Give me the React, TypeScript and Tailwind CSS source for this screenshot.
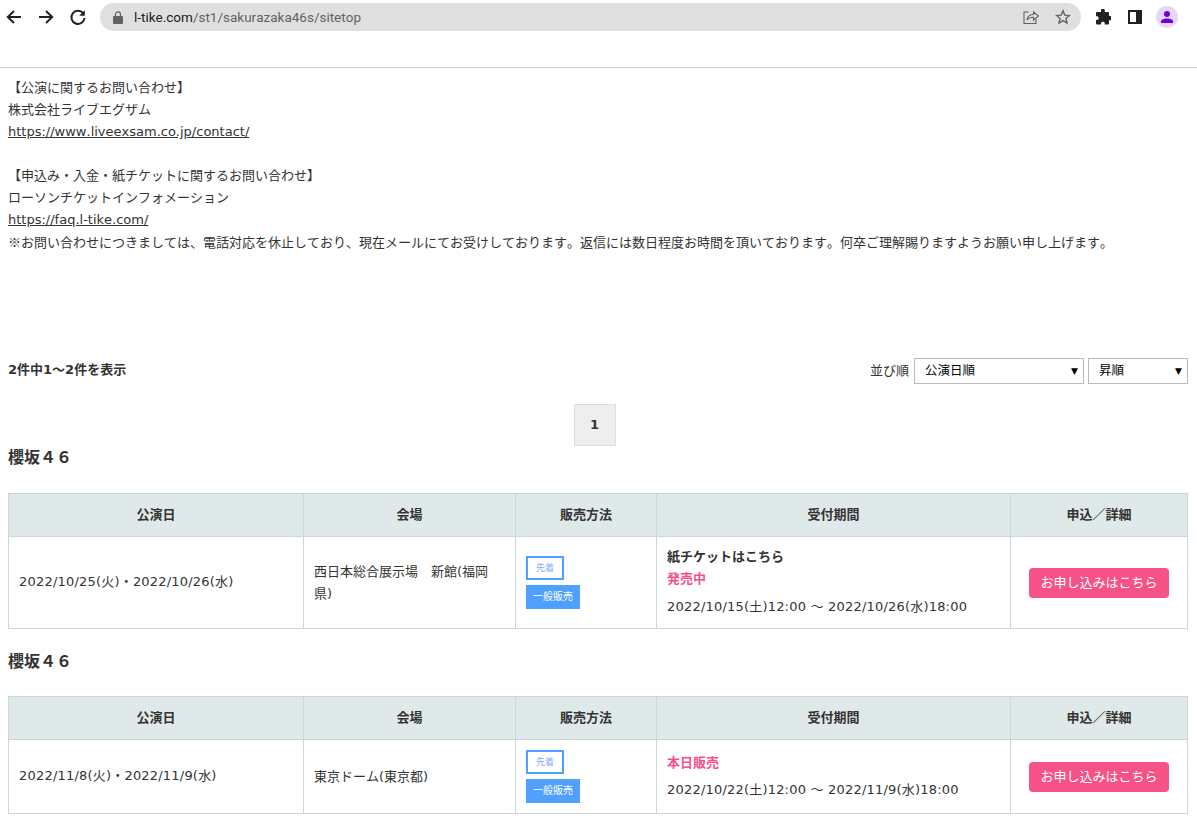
import React from "react";

const Cjk = ({ children }: { children: React.ReactNode }) => (
  <span className="font-['Noto_Sans_CJK_JP',sans-serif]">{children}</span>
);

function Chrome() {
  return (
    <div className="h-[34px] flex items-center bg-white">
      <div className="flex items-center w-[100px] pl-[5px]">
        <svg width="18" height="18" viewBox="0 0 18 18" fill="none" stroke="#202124" strokeWidth="2"><path d="M16 9H3M9 3L2.800 9 9 15" /></svg>
        <svg className="ml-[14px]" width="18" height="18" viewBox="0 0 18 18" fill="none" stroke="#202124" strokeWidth="2"><path d="M2 9h13M9 3l6.200 6L9 15" /></svg>
        <svg className="ml-[14px]" width="18" height="18" viewBox="0 0 18 18" fill="none"><path d="M14.200 5.200A6.600 6.600 0 1 0 15.600 10" stroke="#202124" strokeWidth="2" /><path d="M15.800 2.200v5.600h-5.600z" fill="#202124" /></svg>
      </div>
      <div className="w-[981px] h-[28px] rounded-full bg-[#dfdfdf] flex items-center">
        <svg className="ml-[13px]" width="10" height="13" viewBox="0 0 10 13"><path d="M1 5h8a1 1 0 0 1 1 1v6a1 1 0 0 1-1 1H1a1 1 0 0 1-1-1V6a1 1 0 0 1 1-1z" fill="#5f6368" /><path d="M2.500 5V3.400a2.500 2.500 0 0 1 5 0V5" fill="none" stroke="#5f6368" strokeWidth="1.200" /></svg>
        <span className="ml-[11px] text-[13.5px] text-[#5f6368] font-['Roboto',sans-serif]"><span className="text-[#202124]">l-tike.com</span>/st1/sakurazaka46s/sitetop</span>
        <div className="ml-auto flex items-center gap-[16px] pr-[10px]">
          <svg width="16" height="16" viewBox="0 0 16 16" fill="none" stroke="#5f6368" strokeWidth="1.100"><path d="M5.500 3H1v11.500h12V10" /><path d="M4 11c.5-3.500 3-5.500 6.500-5.500V3L15.500 7l-5 4V8.300C8 8.300 5.500 9 4 11z" /></svg>
          <svg width="16" height="16" viewBox="0 0 16 16" fill="none" stroke="#5f6368" strokeWidth="1.400"><path d="M8 1.800l1.800 4.300 4.600.4-3.500 3 1.100 4.500L8 11.600 4 14l1.100-4.500-3.500-3 4.600-.4z" /></svg>
        </div>
      </div>
      <div className="flex items-center flex-1 pl-[14px]">
        <svg width="16" height="16" viewBox="0 0 16 16" fill="#202124"><path d="M6 1.500a1.900 1.900 0 0 1 3.800 0V3H13a1 1 0 0 1 1 1v3h1a2 2 0 0 1 0 4.300h-1V14.500a1 1 0 0 1-1 1H9.800v-1.300a2 2 0 0 0-3.800 0v1.300H2a1 1 0 0 1-1-1v-3.500h1.300a2 2 0 0 0 0-3.800H1V4a1 1 0 0 1 1-1h4z" /></svg>
        <div className="ml-[17px] w-[14px] h-[14px] border-2 border-[#202124] flex justify-end"><div className="w-[4px] h-full bg-[#202124]" /></div>
        <div className="ml-[14px] w-[22px] h-[22px] rounded-full bg-[#e8d5fb] flex items-center justify-center">
          <svg width="14" height="14" viewBox="0 0 14 14" fill="#7200d6"><circle cx="7" cy="4" r="3" /><path d="M1 13v-1.500C1 9.500 4 8.500 7 8.500s6 1 6 3V13z" /></svg>
        </div>
      </div>
    </div>
  );
}

const Row = ({ date, venue, children }: { date: React.ReactNode; venue: React.ReactNode; children: React.ReactNode }) => (
  <table className="w-[1179px] table-fixed border-collapse text-[13px] leading-[22px] text-[#333]">
    <colgroup>
      <col className="w-[295px]" />
      <col className="w-[212px]" />
      <col className="w-[141px]" />
      <col className="w-[354px]" />
      <col className="w-[177px]" />
    </colgroup>
    <thead>
      <tr className="h-[43px] bg-[#dfe9e9]">
        {["公演日", "会場", "販売方法", "受付期間", "申込／詳細"].map((h) => (
          <th key={h} className="border border-[#ccd8d8] font-bold text-[13px] p-0">{h}</th>
        ))}
      </tr>
    </thead>
    <tbody>
      <tr>
        <td className="border border-[#ccd8d8] px-[10px] pt-[9px] pb-[11px] tracking-[0.2px]">{date}</td>
        <td className="border border-[#ccd8d8] px-[10px] py-[10px]">{venue}</td>
        <td className="border border-[#ccd8d8] px-[10px] py-[10px]">
          <div className="w-[38px] h-[24px] border-2 border-[#4fa0ff] flex items-center justify-center text-[9px] text-[#7faeff] leading-none">先着</div>
          <div className="w-[54px] h-[24px] mt-[5px] bg-[#4fa0ff] flex items-center justify-center text-[10px] text-white leading-none">一般販売</div>
        </td>
        <td className="border border-[#ccd8d8] px-[10px] pt-[9px] pb-[10px]">{children}</td>
        <td className="border border-[#ccd8d8] text-center">
          <a className="inline-block w-[140px] h-[30px] leading-[30px] rounded-[4px] bg-[#f65287] text-white text-[13px]">お申し込みはこちら</a>
        </td>
      </tr>
    </tbody>
  </table>
);

export default function App() {
  return (
    <div className="w-[1197px] h-[822px] overflow-hidden bg-white text-[#333] [font-kerning:none] font-['DejaVu_Sans','Noto_Sans_CJK_JP',sans-serif]">
      <Chrome />
      <div className="h-[33px] border-b border-[#d0d0d0] box-content" />
      <div className="px-[8px] pt-[9px] text-[13px] leading-[22px]">
        <p>【公演に関するお問い合わせ】</p>
        <p>株式会社ライブエグザム</p>
        <p><a className="underline">https://www.liveexsam.co.jp/contact/</a></p>
        <p className="h-[22px]" />
        <p>【申込み・入金・紙チケットに関するお問い合わせ】</p>
        <p>ローソンチケットインフォメーション</p>
        <p><a className="underline">https://faq.l-tike.com/</a></p>
        <p><Cjk>※</Cjk>お問い合わせにつきましては、電話対応を休止しており、現在メールにてお受けしております。返信には数日程度お時間を頂いております。何卒ご理解賜りますようお願い申し上げます。</p>
        <div className="mt-[104px] h-[26px] flex items-center justify-between pr-[1px]">
          <b className="text-[13px] mb-[3px]">2件中1<Cjk>～</Cjk>2件を表示</b>
          <div className="flex items-center text-[12.5px]">
            <span className="text-[13px]">並び順</span>
            <div className="ml-[5px] w-[170px] h-[26px] border border-[#bbb] flex items-center justify-between pl-[10px] pr-[5px] pb-[1px] text-black"><span>公演日順</span><span className="text-[9px]">▼</span></div>
            <div className="ml-[4px] w-[100px] h-[26px] border border-[#bbb] flex items-center justify-between pl-[10px] pr-[5px] pb-[1px] text-black"><span>昇順</span><span className="text-[9px]">▼</span></div>
          </div>
        </div>
        <div className="mt-[20px] flex justify-center pr-[8px]">
          <div className="w-[42px] h-[42px] bg-[#eee] border border-[#ddd] flex items-center justify-center text-[13px] font-bold">1</div>
        </div>
        <h2 className="mt-[1px] text-[16px] leading-[22px] font-bold">櫻坂４６</h2>
        <div className="mt-[24px]">
          <Row date={<>2022/10/25(火)<Cjk>・</Cjk>2022/10/26(水)</>} venue="西日本総合展示場　新館(福岡県)">
            <div className="font-bold">紙チケットはこちら</div>
            <div className="font-bold text-[#f65287]">発売中</div>
            <div className="mt-[5px] tracking-[0.2px]">2022/10/15(土)12:00 <Cjk>～</Cjk> 2022/10/26(水)18:00</div>
          </Row>
        </div>
        <h2 className="mt-[22px] text-[16px] leading-[22px] font-bold">櫻坂４６</h2>
        <div className="mt-[23px]">
          <Row date={<>2022/11/8(火)<Cjk>・</Cjk>2022/11/9(水)</>} venue="東京ドーム(東京都)">
            <div className="font-bold text-[#f65287]">本日販売</div>
            <div className="mt-[4px] tracking-[0.2px]">2022/10/22(土)12:00 <Cjk>～</Cjk> 2022/11/9(水)18:00</div>
          </Row>
        </div>
      </div>
    </div>
  );
}
